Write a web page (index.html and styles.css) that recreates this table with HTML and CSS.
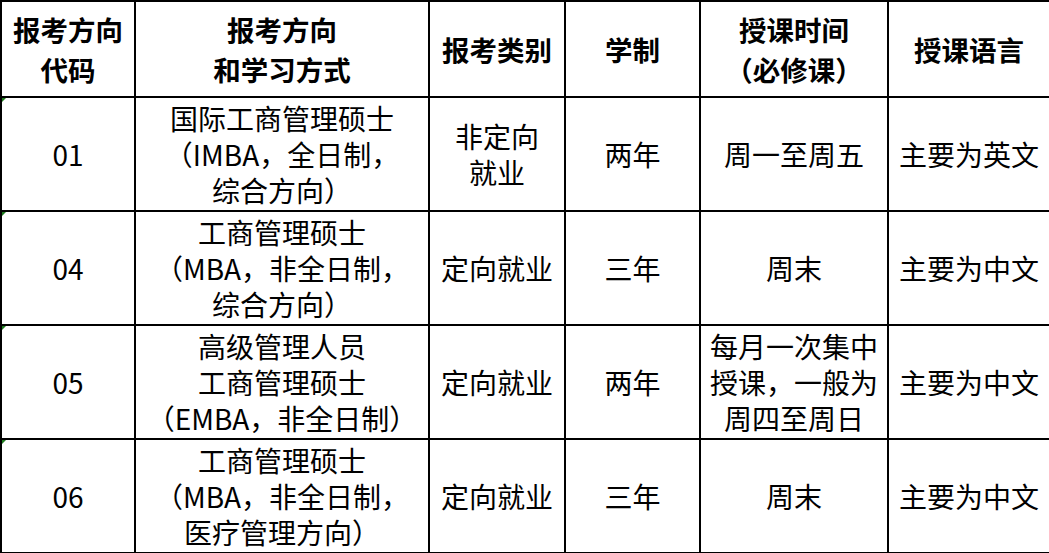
FILE: index.html
```html
<!DOCTYPE html>
<html lang="zh-CN">
<head>
<meta charset="utf-8">
<link rel="stylesheet" href="styles.css">
</head>
<body>
<table class="grid">
  <colgroup>
    <col class="c1"><col class="c2"><col class="c3"><col class="c4"><col class="c5"><col class="c6">
  </colgroup>
  <thead>
    <tr class="head">
      <th>报考方向<br>代码</th>
      <th>报考方向<br>和学习方式</th>
      <th>报考类别</th>
      <th>学制</th>
      <th>授课时间<br>（必修课）</th>
      <th>授课语言</th>
    </tr>
  </thead>
  <tbody>
    <tr class="row">
      <td class="code">01</td>
      <td>国际工商管理硕士<br>（IMBA，全日制，<br>综合方向）</td>
      <td>非定向<br>就业</td>
      <td>两年</td>
      <td>周一至周五</td>
      <td>主要为英文</td>
    </tr>
    <tr class="row">
      <td class="code">04</td>
      <td>工商管理硕士<br>（MBA，非全日制，<br>综合方向）</td>
      <td>定向就业</td>
      <td>三年</td>
      <td>周末</td>
      <td>主要为中文</td>
    </tr>
    <tr class="row">
      <td class="code">05</td>
      <td>高级管理人员<br>工商管理硕士<br>（EMBA，非全日制）</td>
      <td>定向就业</td>
      <td>两年</td>
      <td>每月一次集中<br>授课，一般为<br>周四至周日</td>
      <td>主要为中文</td>
    </tr>
    <tr class="row">
      <td class="code">06</td>
      <td>工商管理硕士<br>（MBA，非全日制，<br>医疗管理方向）</td>
      <td>定向就业</td>
      <td>三年</td>
      <td>周末</td>
      <td>主要为中文</td>
    </tr>
  </tbody>
</table>
</body>
</html>
```

FILE: styles.css
```css
html, body {
  margin: 0;
  padding: 0;
  background: #fff;
}

.grid {
  border-collapse: collapse;
  table-layout: fixed;
  width: 1049px;
  font-family: "Noto Sans CJK SC", "Noto Sans", sans-serif;
  color: #000;
}

.c1 { width: 134px; }
.c2 { width: 294px; }
.c3 { width: 136px; }
.c4 { width: 135px; }
.c5 { width: 188px; }
.c6 { width: 162px; }

.grid th,
.grid td {
  border: 2px solid #000;
  padding: 0;
  text-align: center;
  vertical-align: middle;
  font-size: 28px;
  line-height: 36px;
}

.grid th {
  font-weight: 700;
  font-size: 27.5px;
  line-height: 40px;
}

.head { height: 96px; }
.row { height: 114px; }

.code {
  position: relative;
}

.code::before {
  content: "";
  position: absolute;
  left: 0;
  top: 0;
  width: 0;
  height: 0;
  border-top: 4px solid #1e7b1e;
  border-right: 4px solid transparent;
}
```
